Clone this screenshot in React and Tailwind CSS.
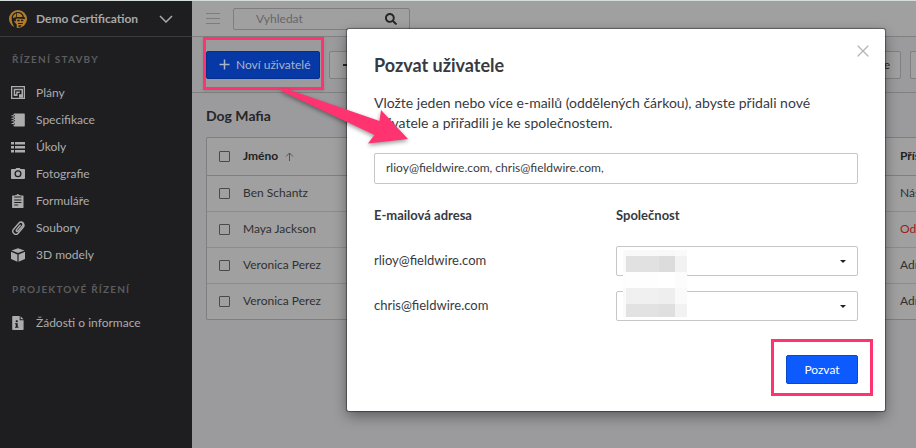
import React from "react";
import { X } from "lucide-react";
import { FaSearch } from "react-icons/fa";

const iconProps = {
  width: 14,
  height: 14,
  viewBox: "0 0 14 14",
  fill: "currentColor",
  "aria-hidden": true,
};

function PlansIcon() {
  return (
    <svg {...iconProps}>
      <path fillRule="evenodd" d="M0 0h14v13H0zM1.300 1.300v10.400h11.400V1.300z" />
      <path d="M2.700 2.700h9.300v9H8V8.200h2.500V4.200H4.200v4h1v-2.600h3.600v1.300H6.600v3H2.700z" />
    </svg>
  );
}

function NotebookIcon() {
  return (
    <svg {...iconProps}>
      <path d="M3.500.5h9.500a.8.8 0 0 1 .8.8v11.400a.8.8 0 0 1-.8.800H3.500a1 1 0 0 1-1-1v-1h1.500v-1H2.500V8.300H4v-1H2.500V5.800H4v-1H2.500V3.300H4v-1H2.500V1.500a1 1 0 0 1 1-1z" />
      <path d="M.5 2.300h2.500v1H.5zM.5 4.800h2.500v1H.5zM.5 7.300h2.500v1H.5zM.5 10h2.500v1H.5z" />
    </svg>
  );
}

function ListIcon() {
  return (
    <svg {...iconProps}>
      <path d="M0 2h3v2.500H0zM4 2h10v2.500H4zM0 6h3v2.500H0zM4 6h10v2.500H4zM0 10h3v2.500H0zM4 10h10v2.500H4z" />
    </svg>
  );
}

function CameraIcon() {
  return (
    <svg {...iconProps}>
      <path fillRule="evenodd" d="M4.500 2l.7-1h3.600l.7 1H13a1 1 0 0 1 1 1v8a1 1 0 0 1-1 1H1a1 1 0 0 1-1-1V3a1 1 0 0 1 1-1zM7 3.300a3.500 3.500 0 1 0 0 7 3.500 3.500 0 0 0 0-7zm0 1.300a2.200 2.200 0 1 1 0 4.400 2.200 2.200 0 0 1 0-4.400z" />
    </svg>
  );
}

function ClipboardIcon() {
  return (
    <svg {...iconProps}>
      <path fillRule="evenodd" d="M1.600 1.600h2.600v-.5h1.500a1.100 1.100 0 0 1 2.200 0h1.500v.5H12a.5.5 0 0 1 .5.500v11.400a.5.5 0 0 1-.5.500H1.600a.5.5 0 0 1-.5-.5V2.100a.5.5 0 0 1 .5-.5zM3.200 2.400v1h7.200v-1zM3.200 5.400v1h7.200v-1zm0 2.500v1h7.200v-1zm0 2.500v1h4v-1z" />
    </svg>
  );
}

function ClipIcon() {
  return (
    <svg {...iconProps} fill="none" stroke="currentColor" strokeWidth="1.400" strokeLinecap="round">
      <path d="M9.200 4.300 5.400 8.800a1 1 0 0 0 1.500 1.300l4.500-5.200a2.200 2.200 0 0 0-3.400-2.900L2.600 8.300a3 3 0 0 0 4.500 4L12.600 5.800a3.400 3.400 0 0 0-2-4.800" />
    </svg>
  );
}

function CubeIcon() {
  return (
    <svg {...iconProps}>
      <path d="M7 .3 13.500 2.500 7 5.100.5 2.500zM0 3.700l6.400 2.700v7.300L0 11zM14 3.700v7.300l-6.400 2.700V6.400z" />
    </svg>
  );
}

function InfoFileIcon() {
  return (
    <svg {...iconProps}>
      <path fillRule="evenodd" d="M2 0h6.700v4.300h3.900V13.200a.8.8 0 0 1-.8.800H2a.8.8 0 0 1-.8-.8V.8A.8.800 0 0 1 2 0zM4.800 4.300v2h1.900v-2zM4 7.200v1h.8v2.600H4v1h3.500v-1h-.8V7.200z" />
      <path d="M9.600.2l2.900 3H9.600z" />
    </svg>
  );
}

function HelmetLogo() {
  return (
    <svg width="20" height="20" viewBox="0 0 20 20" aria-hidden="true">
      <circle cx="10" cy="10" r="9" fill="#b17d28" />
      <path d="M3.600 9.300C3.600 5.500 6.300 2.900 10 2.900c3.200 0 5.600 2.200 5.900 5.200l1.200.6v1.200l-8.300-.4-1 .4.100 2.400-1.700-.3z" fill="#1e1e20" />
      <path d="M4.900 9C5 6.500 6.300 4.900 8.300 4.200L7.800 8.200zM9 4c3-.2 5.100 1.300 5.600 4L8.700 7.900z" fill="#b17d28" />
      <path d="M3.600 9.600 6 10l.3 2.800 2.400 2.600v4.300l-2-.5c-1.200-3-2.800-4.500-3.100-9.600zM9.200 10.800h2.600v1.500H9.200zM13 10.800h2.300v1.500H13zM10 13.900h4.800v1.100H10zM10.500 16.300h3.300l-1.700 1.600h-1.600z" fill="#1e1e20" />
    </svg>
  );
}

const siteItems = [
  ["Plány", PlansIcon],
  ["Specifikace", NotebookIcon],
  ["Úkoly", ListIcon],
  ["Fotografie", CameraIcon],
  ["Formuláře", ClipboardIcon],
  ["Soubory", ClipIcon],
  ["3D modely", CubeIcon],
];

const projectItems = [["Žádosti o informace", InfoFileIcon]];

function NavGroup({ title, items }) {
  return (
    <section>
      <h2 className="pl-3 text-[10px] leading-4 font-bold tracking-[0.12em] text-[#5c5c5e]">{title}</h2>
      <ul className="mt-3">
        {items.map(([label, Icon]) => (
          <li key={label}>
            <a href="#" className="flex h-[27px] items-center gap-[11px] pl-[11px] text-[12px] text-[#acacac]">
              <Icon />
              {label}
            </a>
          </li>
        ))}
      </ul>
    </section>
  );
}

function Sidebar() {
  return (
    <nav className="w-48 shrink-0 bg-[#1e1e20]">
      <button className="flex h-9 w-full items-center border-b border-[#3b3b3c] pl-2 text-left text-[12px] font-bold text-[#a8a8a8]">
        <HelmetLogo />
        <span className="flex-1 pl-2">Demo Certification</span>
        <svg className="mr-[19px]" width="14" height="8" viewBox="0 0 14 8" fill="none" stroke="currentColor" strokeWidth="1.500" aria-hidden="true">
          <path d="M1 1l6 6 6-6" />
        </svg>
      </button>
      <div className="flex flex-col gap-[13px] pt-[14px]">
        <NavGroup title="ŘÍZENÍ STAVBY" items={siteItems} />
        <NavGroup title="PROJEKTOVÉ ŘÍZENÍ" items={projectItems} />
      </div>
    </nav>
  );
}

const people = [
  ["Ben Schantz", "Nás", "text-[#303030]"],
  ["Maya Jackson", "Od", "text-[#a01c1c]"],
  ["Veronica Perez", "Adr", "text-[#303030]"],
  ["Veronica Perez", "Adr", "text-[#303030]"],
];

function Tick({ label }) {
  return (
    <input
      type="checkbox"
      aria-label={label}
      className="block size-[11px] appearance-none rounded-[1px] border border-[#4a4a4c]"
    />
  );
}

function UsersPage() {
  return (
    <main className="min-w-0 flex-1 overflow-hidden bg-[#9b9b9e]">
      <header className="flex h-9 items-center gap-[13px] border-b border-[#808082] bg-[#a0a0a0] pl-[14px]">
        <button aria-label="Menu" className="flex h-4 w-[14px] flex-col justify-center gap-1">
          <span className="h-px w-full bg-[#7c7c7c]" />
          <span className="h-px w-full bg-[#7c7c7c]" />
          <span className="h-px w-full bg-[#7c7c7c]" />
        </button>
        <label className="flex h-[22px] w-[177px] items-center rounded-[2px] border border-[#7e7e80] pr-3 pl-[22px]">
          <input
            aria-label="Vyhledat"
            placeholder="Vyhledat"
            className="min-w-0 flex-1 bg-transparent text-[12px] outline-none placeholder:text-[#666668]"
          />
          <FaSearch className="size-3 text-[#262626]" />
        </label>
      </header>
      <div className="flex h-14 items-center gap-[9px] border-b border-[#808082] pl-[14px] text-[12px]">
        <button className="flex h-7 w-[114px] shrink-0 items-center gap-[6px] rounded-[2px] border border-[#052f8c] bg-[#0639a6] pl-3 text-[#a9b3c9]">
          <svg width="11" height="11" viewBox="0 0 11 11" stroke="currentColor" strokeWidth="1.500" aria-hidden="true">
            <path d="M5.500.5v10M.5 5.500h10" />
          </svg>
          Noví uživatelé
        </button>
        <button aria-label="−" className="flex h-7 w-32 items-center rounded-[2px] border border-[#808082] bg-[#a0a0a0] pl-[13px]">
          <span className="h-[2px] w-[11px] bg-[#262626]" />
        </button>
        <button className="ml-auto h-7 w-28 rounded-[2px] border border-[#808082] bg-[#a0a0a0] pr-[10px] text-right text-[#262626]">
          e
        </button>
        <button aria-label="…" className="h-7 w-[6px] shrink-0 rounded-l-[2px] border border-r-0 border-[#808082] bg-[#a0a0a0]" />
      </div>
      <div className="pt-3 pl-[14px]">
        <h1 className="text-[14px] leading-[22px] font-bold text-[#262628]">Dog Mafia</h1>
        <div className="mt-[10px] rounded-l-[2px] border border-r-0 border-[#7f7f82] bg-[#a0a0a0]">
          <table className="w-full table-fixed border-collapse text-left text-[12px] text-[#303030]">
            <colgroup>
              <col className="w-9" />
              <col />
              <col className="w-4" />
            </colgroup>
            <thead>
              <tr className="h-[37px] border-b border-[#7f7f82] font-bold text-[#222222]">
                <th className="pl-3"><Tick label="Jméno" /></th>
                <th>
                  <span className="flex items-center gap-[7px]">
                    Jméno
                    <svg width="9" height="9" viewBox="0 0 9 9" fill="none" stroke="#555555" aria-hidden="true">
                      <path d="M4.500 9V1M1 4.500 4.500 1 8 4.500" />
                    </svg>
                  </span>
                </th>
                <th className="whitespace-nowrap">Přís</th>
              </tr>
            </thead>
            <tbody>
              {people.map(([name, state, tone], i) => (
                <tr key={i} className="h-9 border-b border-[#8c8c8e] last:border-b-0">
                  <td className="pl-3"><Tick label={name} /></td>
                  <td>{name}</td>
                  <td className={tone}>{state}</td>
                </tr>
              ))}
            </tbody>
          </table>
        </div>
      </div>
    </main>
  );
}

const mosaic = [
  ["h-[6px]", "bg-[#fafafa]", "bg-[#f9f9f9]", "bg-[#f8f8f8]", "bg-[#fafafa]"],
  ["h-4", "bg-[#fafafa]", "bg-[#e1e1e1]", "bg-[#dcdcdc]", "bg-[#f2f2f2]"],
  ["h-4", "bg-[#fdfdfd]", "bg-[#fefefe]", "bg-[#ffffff]", "bg-[#fcfcfc]"],
  ["h-4", "bg-[#fafafa]", "bg-[#f0f0f0]", "bg-[#eeeeee]", "bg-[#fafafa]"],
  ["h-[13px]", "bg-[#fafafa]", "bg-[#e2e2e2]", "bg-[#dfdfdf]", "bg-[#f2f2f2]"],
];

function Mosaic() {
  return (
    <div className="pointer-events-none absolute top-1 left-[249px]" aria-hidden="true">
      {mosaic.map(([height, edge, left, right, end], i) => (
        <div key={i} className={`flex ${height}`}>
          <span className={`w-[3px] ${edge}`} />
          <span className={`w-[33px] ${left}`} />
          <span className={`w-4 ${right}`} />
          <span className={`w-3 ${end}`} />
        </div>
      ))}
    </div>
  );
}

function InviteRow({ id, email }) {
  return (
    <div className="flex h-[30px] items-center">
      <label htmlFor={id} className="w-1/2 text-[13px]">{email}</label>
      <span className="relative flex w-1/2 items-center">
        <select id={id} className="h-[30px] w-full appearance-none rounded-[2px] border border-[#c6c6c6] bg-white" />
        <svg className="pointer-events-none absolute right-3" width="6" height="3" viewBox="0 0 6 3" aria-hidden="true">
          <path d="M0 0h6L3 3z" fill="#222222" />
        </svg>
      </span>
    </div>
  );
}

function InviteDialog() {
  return (
    <div className="absolute inset-0 flex items-start pt-[29px] pr-[31px] pl-[347px]">
      <div
        role="dialog"
        aria-labelledby="invite-title"
        className="relative flex-1 rounded-[2px] bg-white px-[27px] pt-6 pb-[27px] text-[#373a42] shadow-[0_0_1px_1px_rgba(0,0,0,0.4),0_5px_14px_rgba(0,0,0,0.4)]"
      >
        <button aria-label="×" className="absolute top-3 right-3">
          <X className="size-5 text-[#b4b4b4]" strokeWidth={1.500} />
        </button>
        <h2 id="invite-title" className="text-[18px] leading-6 font-bold">Pozvat uživatele</h2>
        <p className="mt-4 text-[14px] leading-5">
          Vložte jeden nebo více e-mailů (oddělených čárkou), abyste přidali nové<br />
          uživatele a přiřadili je ke společnostem.
        </p>
        <input
          aria-labelledby="invite-title"
          defaultValue="rlioy@fieldwire.com, chris@fieldwire.com,"
          className="mt-5 block h-[31px] w-full rounded-[2px] border border-[#c6c6c6] px-[11px] pb-[2px] text-[12px] outline-none"
        />
        <div className="mt-[21px] flex text-[13px] leading-5 font-bold">
          <span className="w-1/2">E-mailová adresa</span>
          <span className="w-1/2">Společnost</span>
        </div>
        <div className="relative mt-[21px] flex flex-col gap-[15px]">
          <InviteRow id="company-1" email="rlioy@fieldwire.com" />
          <InviteRow id="company-2" email="chris@fieldwire.com" />
          <Mosaic />
        </div>
        <div className="mt-[34px] flex justify-end">
          <button className="h-[29px] w-[72px] rounded-[2px] border border-[#0a48c8] bg-[#0d5bff] text-[12px] text-white">Pozvat</button>
        </div>
        <div className="pointer-events-none absolute right-3 bottom-[15px] h-[57px] w-[102px] border-[3px] border-[#ff3370]" />
      </div>
    </div>
  );
}

function Callouts() {
  return (
    <div className="pointer-events-none absolute inset-0 overflow-hidden" aria-hidden="true">
      <div className="absolute top-[37px] left-[203px] h-[53px] w-[121px] border-[3px] border-[#ff3370] shadow-sm" />
      <svg className="absolute top-20 left-[270px] drop-shadow-[0_2px_2px_rgba(0,0,0,0.4)]" width="150" height="70" viewBox="270 80 150 70">
        <path d="M279 89h8l92.500 32 1.500-11L408 139l-40 4.500 6.500-8.500-91-43z" fill="#ff3370" />
      </svg>
    </div>
  );
}

export default function App() {
  return (
    <div className="relative flex min-h-screen border-t border-[#d5dcda] font-['Lato',sans-serif]">
      <Sidebar />
      <UsersPage />
      <div className="absolute inset-x-0 -top-px bottom-0">
        <InviteDialog />
        <Callouts />
      </div>
    </div>
  );
}
